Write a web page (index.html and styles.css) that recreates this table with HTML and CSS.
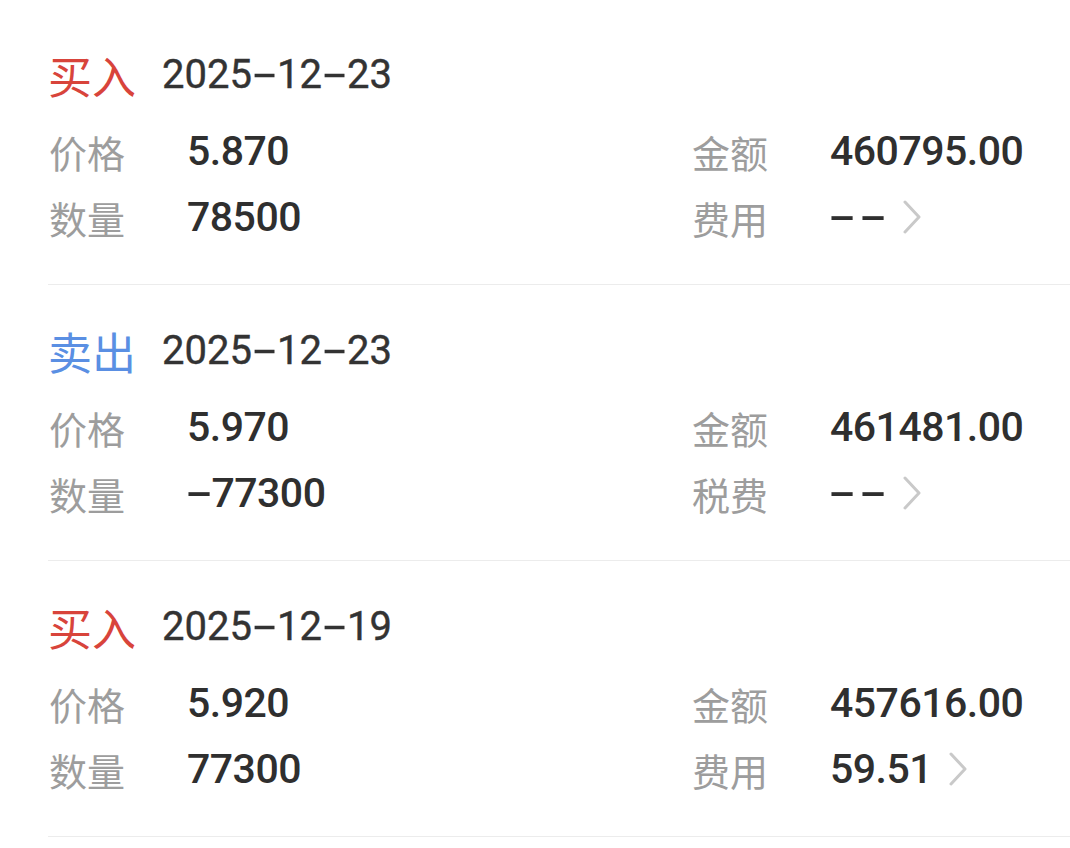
FILE: index.html
```html
<!DOCTYPE html>
<html lang="zh-CN">
<head>
<meta charset="utf-8">
<title>成交记录</title>
<link rel="stylesheet" href="styles.css">
</head>
<body>
<div class="list">
  <div class="item">
    <div class="title"><span class="type buy">买入</span><span class="date">2025<span class="hy">-</span>12<span class="hy">-</span>23</span></div>
    <div class="grid">
      <div class="cell"><span class="label">价格</span><span class="value">5.870</span></div>
      <div class="cell"><span class="label">金额</span><span class="value">460795.00</span></div>
      <div class="cell"><span class="label">数量</span><span class="value">78500</span></div>
      <div class="cell"><span class="label">费用</span><span class="value"><span class="hy">-</span><span class="hy">-</span></span><svg class="chev" width="20" height="34" viewBox="0 0 20 34"><polyline points="3,2 17,17 3,32" fill="none" stroke="#c9c9c9" stroke-width="3" stroke-linecap="round" stroke-linejoin="round"/></svg></div>
    </div>
  </div>
  <div class="item">
    <div class="title"><span class="type sell">卖出</span><span class="date">2025<span class="hy">-</span>12<span class="hy">-</span>23</span></div>
    <div class="grid">
      <div class="cell"><span class="label">价格</span><span class="value">5.970</span></div>
      <div class="cell"><span class="label">金额</span><span class="value">461481.00</span></div>
      <div class="cell"><span class="label">数量</span><span class="value"><span class="hy">-</span>77300</span></div>
      <div class="cell"><span class="label">税费</span><span class="value"><span class="hy">-</span><span class="hy">-</span></span><svg class="chev" width="20" height="34" viewBox="0 0 20 34"><polyline points="3,2 17,17 3,32" fill="none" stroke="#c9c9c9" stroke-width="3" stroke-linecap="round" stroke-linejoin="round"/></svg></div>
    </div>
  </div>
  <div class="item">
    <div class="title"><span class="type buy">买入</span><span class="date">2025<span class="hy">-</span>12<span class="hy">-</span>19</span></div>
    <div class="grid">
      <div class="cell"><span class="label">价格</span><span class="value">5.920</span></div>
      <div class="cell"><span class="label">金额</span><span class="value">457616.00</span></div>
      <div class="cell"><span class="label">数量</span><span class="value">77300</span></div>
      <div class="cell"><span class="label">费用</span><span class="value">59.51</span><svg class="chev" width="20" height="34" viewBox="0 0 20 34"><polyline points="3,2 17,17 3,32" fill="none" stroke="#c9c9c9" stroke-width="3" stroke-linecap="round" stroke-linejoin="round"/></svg></div>
    </div>
  </div>
</div>
</body>
</html>
```
FILE: styles.css
```css
html, body {
  margin: 0;
  padding: 0;
  background: #ffffff;
}
body {
  font-family: Roboto, "Noto Sans CJK SC", sans-serif;
  color: #303030;
}
.list {
  padding-top: 9px;
  padding-left: 48px;
}
.item {
  padding: 40px 0 34px 0;
  border-bottom: 1px solid #ececec;
}
.title {
  display: flex;
  align-items: center;
  height: 52px;
}
.type {
  font-family: "Noto Sans CJK SC", sans-serif;
  font-size: 44px;
  line-height: 52px;
  margin-right: 26px;
}
.buy { color: #d8443b; }
.sell { color: #5a8fe3; }
.date {
  font-size: 40px;
  line-height: 52px;
  font-weight: 400;
  color: #333333;
  -webkit-text-stroke: 0.4px #333333;
}
.hy {
  display: inline-block;
  transform: scaleX(2);
  margin: 0 7px;
}
.grid {
  display: grid;
  grid-template-columns: 643px 1fr;
  grid-auto-rows: 66px;
  margin-top: 17px;
}
.cell {
  display: flex;
  align-items: center;
}
.label {
  width: 139px;
  font-family: "Noto Sans CJK SC", sans-serif;
  font-size: 38px;
  color: #9d9d9d;
  padding-left: 1px;
  box-sizing: border-box;
}
.value {
  font-size: 41px;
  font-weight: 500;
  color: #2f2f2f;
  letter-spacing: -0.5px;
}
.value .hy {
  margin: 0 6px 0 5px;
}
.value .hy + .hy {
  margin-left: 12px;
}
.chev {
  margin-left: 16px;
}
```
